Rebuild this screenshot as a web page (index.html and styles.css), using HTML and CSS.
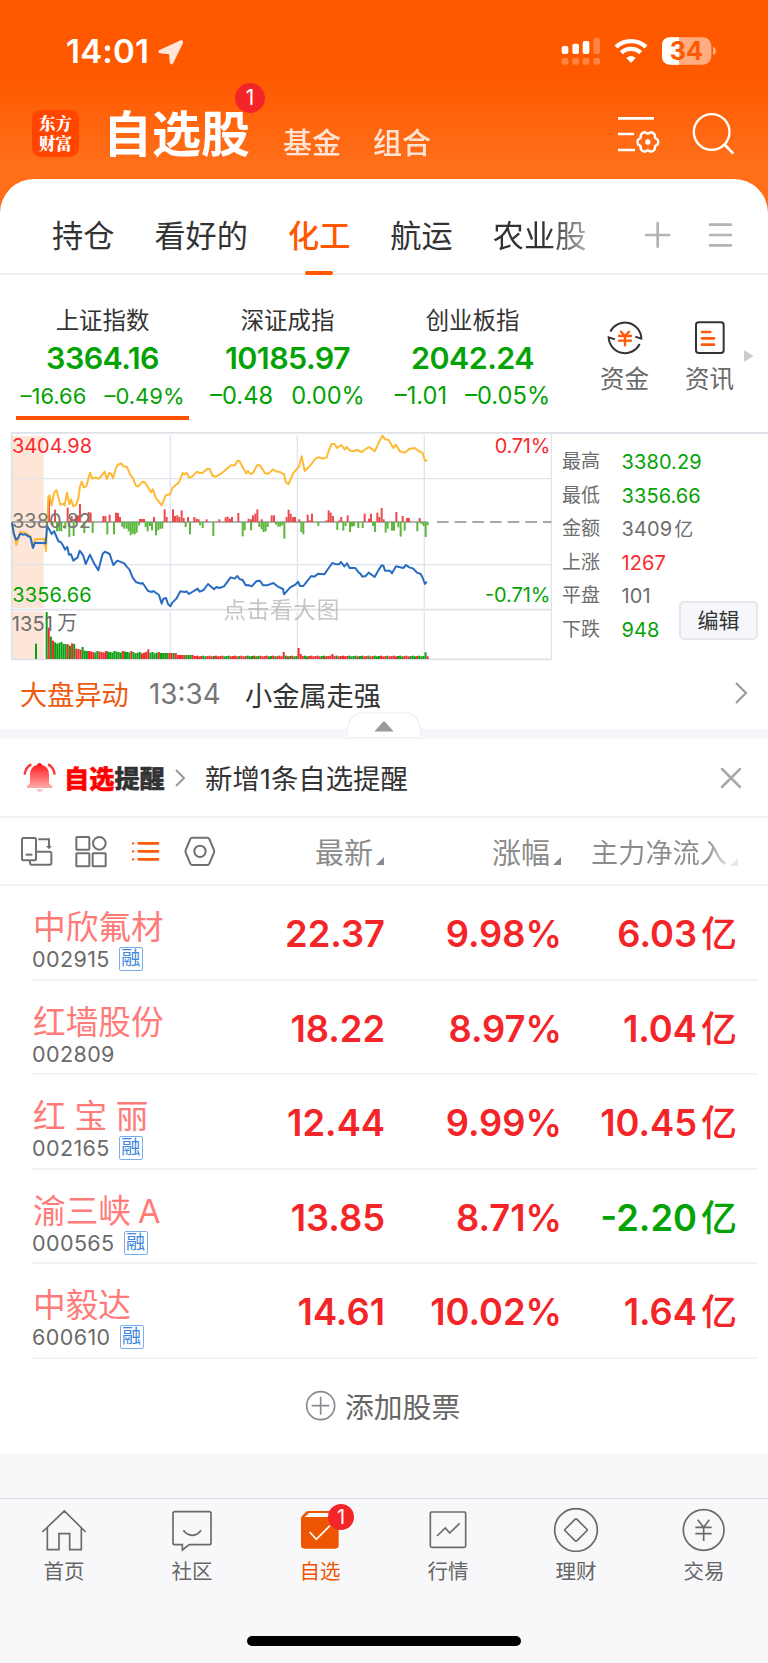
FILE: index.html
```html
<!DOCTYPE html>
<html lang="zh-CN">
<head>
<meta charset="utf-8">
<title>自选股</title>
<link rel="stylesheet" href="styles.css">
</head>
<body>
<header class="header">
  <div class="status">
    <span class="clock">14:01</span>
    <svg class="locate" viewBox="470 115 80 80" width="27" height="27"><path d="M476 148 L540 119 Q549 117 547 127 L518 187 Q513 194 508 186 L506 160 L479 157 Q470 154 476 148Z" fill="#fff" opacity=".85"/></svg>
    <svg class="signals" viewBox="576 105 474 96" width="158" height="32">
      <g fill="#fff"><rect x="581" y="138" width="20" height="24" rx="6"/><rect x="613" y="131" width="20" height="31" rx="6"/><rect x="644" y="123" width="20" height="39" rx="6"/>
      <g opacity=".25"><rect x="676" y="113" width="20" height="49" rx="6"/><rect x="581" y="174" width="20" height="20" rx="6"/><rect x="613" y="174" width="20" height="20" rx="6"/><rect x="644" y="174" width="20" height="20" rx="6"/><rect x="676" y="174" width="20" height="20" rx="6"/></g></g>
      <g fill="none" stroke="#fff" stroke-width="13"><path d="M744 141 A66 66 0 0 1 834 141"/><path d="M760 158 A42 42 0 0 1 818 158"/></g>
      <path d="M775 174 Q789 162 803 174 L789 189Z" fill="#fff"/>
      <rect x="882" y="112" width="148" height="82" rx="25" fill="#fff" opacity=".5"/>
      <path d="M933 112 H907 Q882 112 882 137 V169 Q882 194 907 194 H933Z" fill="#fff"/>
      <path d="M1035 140 Q1044 144 1044 153 Q1044 162 1035 166Z" fill="#fff" opacity=".5"/>
      <text x="955" y="180" class="battery">34</text>
    </svg>
  </div>
  <div class="titlebar">
    <div class="logo"><span>东方</span><span>财富</span></div>
    <h1 class="title">自选股<i class="badge">1</i></h1>
    <span class="subtitle">基金</span>
    <span class="subtitle">组合</span>
    <svg class="head-icons" viewBox="744 333 360 135" width="120" height="45" fill="none" stroke="#fff">
      <path d="M750 355H858M750 402H798M750 450H801" stroke-width="8"/>
      <path transform="translate(839.500 426) scale(.92)" stroke-width="8" stroke-linejoin="round" d="M32.200 -7.400 Q36 0 32.200 7.400 L24 13 L22.500 24.100 Q18 31 9.600 31.600 L0 27 L-9.600 31.600 Q-18 31 -22.500 24.100 L-24 13 L-32.200 7.400 Q-36 0 -32.200 -7.400 L-24 -13 L-22.500 -24.100 Q-18 -31 -9.600 -31.600 L0 -27 L9.600 -31.600 Q18 -31 22.500 -24.100 L24 -13Z"/>
      <circle cx="839.500" cy="426" r="8" fill="#fff" stroke="none"/>
      <circle cx="1031" cy="396" r="53.500" stroke-width="7"/><path d="M1068 432 L1096 461" stroke-width="8"/>
    </svg>
  </div>
</header>

<main>
  <nav class="groups">
    <span>持仓</span><span>看好的</span><span class="on">化工</span><span>航运</span><span class="fade">农业股</span>
    <svg class="group-tools" viewBox="825 660 276 90" width="92" height="30" stroke="#b3b3b3" stroke-width="8" stroke-linecap="round"><path d="M834 705H904M869 669V740"/><path d="M1026 674H1089M1026 705H1089M1026 736H1089"/></svg>
  </nav>

  <section class="indices">
    <div class="index on"><b>上证指数</b><strong>3364.16</strong><p><span>–16.66</span><span>–0.49%</span></p></div>
    <div class="index"><b>深证成指</b><strong>10185.97</strong><p><span>–0.48</span><span>0.00%</span></p></div>
    <div class="index"><b>创业板指</b><strong>2042.24</strong><p><span>–1.01</span><span>–0.05%</span></p></div>
    <div class="quick">
      <svg viewBox="714 114 114 117" width="38" height="39" fill="none" stroke="#333" stroke-width="6"><path d="M727 155 A49 49 0 0 1 820 176 L802 170"/><path d="M815 192 A49 49 0 0 1 722 172 L741 178" /><path d="M759 155 L771 168 L783 155M753 168H789M753 182H789M771 168V196" stroke="#ff5a0a" stroke-width="7" stroke-linecap="round"/></svg>
      <span>资金</span>
    </div>
    <div class="quick">
      <svg viewBox="969 114 114 117" width="38" height="39" fill="none"><rect x="984" y="127" width="83" height="92" rx="8" stroke="#333" stroke-width="6"/><path d="M1002 156H1027M1002 175H1038M1002 194H1038" stroke="#ff5a0a" stroke-width="8" stroke-linecap="round"/></svg>
      <span>资讯</span>
    </div>
    <svg class="more" viewBox="0 0 10 12" width="10" height="12"><path d="M0 0L9.500 6L0 12Z" fill="#ccc"/></svg>
  </section>

  <section class="market">
    <svg class="chart" viewBox="0 21 1656 687" width="552" height="229">
      <rect x="36" y="33" width="95" height="516" fill="#fde5d8"/><rect x="36" y="559" width="95" height="143" fill="#fde5d8"/>
      <g stroke="#e1e4ec" stroke-width="5" fill="none"><path d="M33 23.500H1656" stroke="#dfe1e8"/><path d="M35 21V704" stroke="#dfe1e8"/><path d="M36 161H1654M36 419H1654" stroke-width="4"/><path d="M33 554H1654M33 703H1656" stroke="#dfe1e8"/><path d="M511 31V547M511 560V702M892 31V547M892 560V702M1273 31V547M1273 560V702" stroke-width="4"/><path d="M1654 24V704" stroke-width="4"/></g>
      <path d="M36 291H1282" stroke="#999" stroke-width="4"/><path d="M1311 291H1654" stroke="#8c8c8c" stroke-width="5" stroke-dasharray="35 18"/>
      <g id="bars"></g>
      <g fill="none" stroke-width="6" stroke-linejoin="round">
        <path stroke="#fdbb35" d="M37 298L42 325L49 360L61 320L78 325L91 333L99 366L105 342L132 342L138 378L145 217L149 211L155 242L162 204L169 195L181 239L190 236L194 241L201 203L208 238L213 223L220 244L228 240L235 220L240 184L245 170L251 187L259 184L270 143L277 161L286 158L298 161L314 140L320 162L328 144L334 147L339 160L348 128L354 119L364 115L370 124L381 126L390 148L399 160L408 183L415 184L428 170L434 171L453 202L459 193L467 218L485 241L497 211L510 208L517 189L537 172L548 144L554 148L560 143L567 158L576 155L591 140L599 144L608 143L622 131L629 132L638 153L647 155L665 145L693 121L705 121L712 108L718 107L738 145L744 138L751 147L759 144L771 121L780 121L795 145L806 146L819 133L828 139L840 141L845 145L852 147L857 171L865 178L867 174L880 144L897 125L905 94L914 138L934 118L945 102L956 97L970 101L980 97L987 75L995 57L1004 57L1011 69L1024 60L1034 73L1040 66L1050 77L1063 78L1070 75L1086 81L1096 73L1107 66L1118 74L1124 79L1138 49L1148 32L1155 43L1166 45L1180 69L1187 59L1200 79L1215 83L1227 72L1244 69L1256 78L1267 83L1275 107L1282 106"/>
        <path stroke="#286cc2" d="M36 292L41 325L48 344L54 340L60 326L68 329L77 328L85 334L91 336L99 369L105 353L137 355L141 302L149 316L155 327L162 318L175 348L183 352L190 363L195 374L202 366L207 389L213 388L220 407L233 397L239 377L250 392L257 417L270 389L282 415L295 436L308 386L315 380L329 387L340 420L352 407L373 415L380 425L388 433L398 458L409 472L424 476L428 474L444 498L456 501L460 498L477 510L485 536L490 521L498 519L504 537L511 544L517 533L529 521L541 499L554 501L560 499L567 507L593 491L599 500L611 495L624 477L642 493L649 486L658 489L672 484L692 457L704 461L712 453L720 463L728 465L737 481L744 480L755 484L770 468L780 467L789 481L801 481L820 474L834 485L849 492L852 508L870 488L887 478L894 470L900 483L910 483L918 473L934 453L943 455L955 446L973 448L984 432L997 414L1008 418L1017 418L1023 411L1033 424L1041 415L1049 429L1066 429L1074 440L1081 446L1087 455L1097 453L1106 443L1124 456L1137 433L1145 421L1150 422L1155 437L1170 437L1176 445L1188 424L1210 429L1218 420L1228 427L1240 431L1251 443L1262 447L1267 456L1275 477L1280 470"/>
      </g>
      <g class="chart-text">
        <text x="36" y="84" textLength="240" class="up">3404.98</text><text x="36" y="308" textLength="237" fill="#777">3380.82</text><text x="37" y="532" textLength="238" class="down">3356.66</text><text x="35" y="617" textLength="124" fill="#6d6d6d">1351</text><text x="172" y="616" fill="#6d6d6d">万</text>
        <text x="1484" y="84" textLength="167" class="up">0.71%</text><text x="1455" y="532" textLength="196" class="down">-0.71%</text><text x="670" y="580" textLength="348" class="hint">点击看大图</text>
      </g>
    </svg>
    <div class="stats">
      <dl><dt>最高</dt><dd class="down">3380.29</dd><dt>最低</dt><dd class="down">3356.66</dd><dt>金额</dt><dd>3409<em>亿</em></dd><dt>上涨</dt><dd class="up">1267</dd><dt>平盘</dt><dd>101</dd><dt>下跌</dt><dd class="down">948</dd></dl>
      <button class="edit">编辑</button>
    </div>
  </section>

  <section class="news">
    <span class="topic">大盘异动</span><time>13:34</time><span class="headline">小金属走强</span>
    <svg viewBox="0 0 14 24" width="14" height="24" fill="none" stroke="#999" stroke-width="2"><path d="M2 2L12 12L2 22"/></svg>
  </section>
  <div class="divider">
    <svg class="handle" viewBox="1038 155 228 80" width="76" height="27"><path d="M1041 232 Q1040 159 1085 157 H1219 Q1263 159 1263 232Z" fill="#fff" stroke="#eff0f3" stroke-width="4"/><path d="M1123 213L1148 185Q1152 181 1156 185L1181 213Z" fill="#999"/></svg>
  </div>

  <section class="alert">
    <svg viewBox="66 306 105 99" width="35" height="33"><defs><linearGradient id="bell" x2="0" y2="1"><stop stop-color="#f11"/><stop offset="1" stop-color="#ffc4c4"/></linearGradient></defs><path fill="url(#bell)" d="M119 312Q125 312 126 318Q147 323 147 347V369Q147 377 157 382V387H81V382Q90 377 90 369V347Q90 323 111 318Q112 312 119 312ZM109 391H129Q127 399 119 399Q111 399 109 391Z"/><path d="M94 316Q77 324 74 347M144 316Q161 324 164 347" fill="none" stroke="#ff3535" stroke-width="7"/></svg>
    <span class="alert-name"><i>自选</i>提醒</span>
    <svg viewBox="0 0 11 18" width="11" height="18" fill="none" stroke="#999" stroke-width="2"><path d="M1 1L9 9L1 17"/></svg>
    <span class="alert-text">新增1条自选提醒</span>
    <svg class="close" viewBox="0 0 22 22" width="22" height="22" stroke="#aaa" stroke-width="2.500" stroke-linecap="round"><path d="M2 2L20 20M20 2L2 20"/></svg>
  </section>

  <section class="toolbar">
    <svg class="views" viewBox="60 520 594 108" width="198" height="36" fill="none" stroke="#707070" stroke-width="6">
      <rect x="66" y="535" width="42" height="67" rx="5"/><path d="M77 585H97"/><path d="M108 576H149Q154 576 154 581V610Q154 615 149 615H96Q90 615 90 609V602"/><path d="M115 539H147V562"/><path d="M138 559H156L147 569Z" fill="#707070" stroke="none"/>
      <rect x="229" y="532" width="39" height="38" rx="2"/><circle cx="298" cy="551" r="19"/><rect x="229" y="581" width="39" height="39" rx="2"/><rect x="278" y="581" width="39" height="39" rx="2"/>
      <g stroke="#ff5a0a" stroke-width="8" stroke-linecap="round"><path d="M416 551H474M416 575H474M416 599H474"/><path d="M399 551H400M399 575H400M399 599H400" stroke-width="7"/></g>
      <path d="M577 534H622Q626 534 628 538L642 571Q643 575 642 579L628 612Q626 616 622 616H577Q573 616 571 612L557 579Q556 575 557 571L571 538Q573 534 577 534Z"/><circle cx="600" cy="575" r="17"/>
    </svg>
    <span class="col c1">最新</span><span class="col c2">涨幅</span><span class="col c3">主力净流入</span>
  </section>

  <section class="stocks">
    <div class="stock"><div class="name"><b>中欣氟材</b><p>002915<i>融</i></p></div><span>22.37</span><span>9.98%</span><span>6.03<em>亿</em></span></div>
    <div class="stock"><div class="name"><b>红墙股份</b><p>002809</p></div><span>18.22</span><span>8.97%</span><span>1.04<em>亿</em></span></div>
    <div class="stock"><div class="name"><b class="spaced">红 宝 丽</b><p>002165<i>融</i></p></div><span>12.44</span><span>9.99%</span><span>10.45<em>亿</em></span></div>
    <div class="stock"><div class="name"><b>渝三峡<em>A</em></b><p>000565<i>融</i></p></div><span>13.85</span><span>8.71%</span><span class="neg">-2.20<em>亿</em></span></div>
    <div class="stock"><div class="name"><b>中毅达</b><p>600610<i>融</i></p></div><span>14.61</span><span>10.02%</span><span>1.64<em>亿</em></span></div>
  </section>
  <div class="add">
    <svg viewBox="915 90 93 93" width="31" height="31" fill="none" stroke="#8a8a92" stroke-width="5"><circle cx="962" cy="137" r="42"/><path d="M935 137H988M962 110V164"/></svg>
    <span>添加股票</span>
  </div>
</main>

<footer class="tabbar">
  <a><svg viewBox="117 438 150 138"><path d="M127 516L193 453L257 516M142 503V569H177V521H209V569H244V503"/></svg><span>首页</span></a>
  <a><svg viewBox="501 438 150 138"><path d="M524 455H628Q633 455 633 460V549Q633 554 628 554H568L547 570V554H524Q519 554 519 549V460Q519 455 524 455ZM550 511Q561 526 577 526Q593 526 603 511"/></svg><span>社区</span></a>
  <a class="on"><svg viewBox="885 438 150 138"><path stroke="none" fill="#ee5500" fill-rule="evenodd" d="M925 453H1006Q1016 453 1016 463V556Q1016 566 1006 566H913Q903 566 903 556V475Q903 471 906 468L918 456Q921 453 925 453ZM927 459L914 471H1010V459Z"/><path d="M929 516L949 538L990 497" stroke="#fff"/></svg><i class="badge">1</i><span>自选</span></a>
  <a><svg viewBox="165 438 150 138"><rect x="187" y="456" width="106" height="106" rx="4"/><path d="M207 528L232 504L245 519L275 490"/></svg><span>行情</span></a>
  <a><svg viewBox="549 438 150 138"><circle cx="624" cy="510" r="64"/><path d="M621 478Q624 475 627 478L656 507Q659 510 656 513L627 542Q624 545 621 542L592 513Q589 510 592 507Z"/></svg><span>理财</span></a>
  <a><svg viewBox="933 438 150 138"><circle cx="1007" cy="510" r="61"/><path d="M989 479L1007 502L1024 479M982 502H1031M982 521H1031M1007 502V543"/></svg><span>交易</span></a>
</footer>
<div class="home"></div>
<script src="chart.js"></script>
</body>
</html>
```
FILE: styles.css
```css
* { box-sizing: border-box; margin: 0; padding: 0; }
body { width: 768px; height: 1663px; overflow: hidden; background: #f8f8fb; font-family: Inter, "Noto Sans CJK SC", sans-serif; color: #333; white-space: nowrap; }
i, em { font-style: normal; }
svg { display: block; flex: none; }
.up { color: #f82a2e; fill: #f82a2e; }
.down { color: #05a205; fill: #05a205; }

.header { height: 215px; background: linear-gradient(#ff5900 0, #ff5900 78px, #ff6f1a 165px, #ff6f1a); color: #fff; }
.status { height: 102px; padding: 0 50px 0 66px; display: flex; align-items: center; }
.clock { font-size: 33px; font-weight: 600; width: 91px; letter-spacing: .2px; }
.signals { margin-left: auto; }
.locate { margin-top: 2px; }
.battery { font-size: 75px; font-weight: 700; fill: #ff5900; text-anchor: middle; }
.titlebar { height: 77px; padding: 0 32px; display: flex; align-items: flex-start; }
.logo { width: 47px; height: 47px; margin-top: 8px; border-radius: 9px; background: #ff4500; display: flex; flex-direction: column; align-items: center; padding-top: 4px; font: 900 16.500px/19.500px "Noto Serif CJK SC", "Noto Sans CJK SC", sans-serif; }
.title { position: relative; margin-left: 24px; width: 180px; font-size: 49px; letter-spacing: 0; line-height: 65px; font-weight: 600; }
.badge { position: absolute; left: 132px; top: -19px; width: 30px; height: 30px; border-radius: 50%; background: #f42529; color: #fff; font-size: 21px; line-height: 30px; font-weight: 400; letter-spacing: 0; text-align: center; }
.subtitle { width: 90px; font-size: 29px; line-height: 40px; margin-top: 22px; opacity: .82; font-weight: 500; }
.head-icons { margin-left: auto; margin-top: 9px; }

main { display: block; position: relative; margin-top: -36px; background: #fff; border-radius: 34px 34px 0 0; height: 1274px; }
.groups { height: 96px; padding-left: 52px; display: flex; font-size: 31.200px; line-height: 114px; border-bottom: 2px solid #f0f0f1; }
.groups span { margin-right: 40px; }
.groups .on { position: relative; color: #ff5900; font-weight: 500; }
.groups .on::after { content: ""; position: absolute; left: 17px; bottom: -2px; width: 28px; height: 4px; border-radius: 2px; background: #ff5900; }
.groups .fade { background: linear-gradient(90deg, #333 60%, #aaa); -webkit-background-clip: text; color: transparent; margin: 0; }
.group-tools { margin: 41px 33px 0 auto; }

.indices { height: 157px; display: flex; padding-left: 16px; }
.index { width: 173px; margin-right: 12px; height: 145px; padding-top: 30px; text-align: center; display: flex; flex-direction: column; }
.index.on { border-bottom: 4px solid #ff5200; }
.index b { font-size: 23.400px; font-weight: 400; line-height: 31px; }
.index strong { font-size: 30.500px; font-weight: 600; line-height: 44px; color: #05a205; letter-spacing: -.6px; }
.index p { display: flex; justify-content: center; gap: 18px; font-size: 23.700px; line-height: 32px; color: #05a205; }
.index.on p { font-size: 22px; }
.quick { width: 85px; padding-top: 43px; display: flex; flex-direction: column; align-items: center; font-size: 24.500px; line-height: 40px; color: #6a6a6a; }
.index + .quick { margin-left: 11px; }
.quick svg { margin-bottom: 2px; }
.more { margin: 75px 0 0 -8px; }

.market { display: flex; height: 229px; }
.chart-text { font-size: 60px; }
.chart-text .hint { fill: #999; opacity: .55; font-size: 68px; }
.stats { width: 216px; border-top: 2px solid #dfe1e8; padding: 10px 0 0 10px; position: relative; }
.stats dl { display: grid; grid-template-columns: 59.500px 1fr; grid-auto-rows: 33.500px; line-height: 36px; font-size: 19px; color: #6d6d6d; }
.stats dd { font-size: 20px; letter-spacing: .1px; }
.stats em { margin-left: 2px; font-size: 19px; }
.edit { position: absolute; left: 127px; top: 167px; width: 79px; height: 39px; border: 2px solid #e6e7ec; border-radius: 5px; background: #f6f7fa; font: 21px/34px Inter, "Noto Sans CJK SC", sans-serif; color: #333; }

.news { height: 68px; padding: 0 20px 4px 20px; display: flex; align-items: center; font-size: 27.200px; }
.topic { width: 129px; color: #ee5a10; }
.news time { width: 96px; color: #777; font-size: 27.800px; padding-top: 2px; }
.news svg { margin-left: auto; }
.headline { margin-top: 2px; }
.divider { height: 10px; background: #f6f7fa; position: relative; }
.handle { position: absolute; left: 346px; top: -17px; }

.alert { height: 79px; padding: 0 26px 0 22px; display: flex; align-items: center; border-bottom: 2px solid #f3f3f4; }
.alert-name { width: 111px; margin-left: 7px; font-size: 25.200px; font-weight: 900; -webkit-text-stroke: .4px; }
.alert-name i { color: #f00; }
.alert-text { margin-left: 19px; font-size: 27.400px; }
.alert-name, .alert-text { padding-bottom: 2px; }
.close { margin-left: auto; }

.toolbar { height: 68px; padding-left: 20px; display: flex; align-items: center; border-bottom: 2px solid #f3f3f4; color: #8c8c8c; }
.col { position: relative; font-size: 29px; }
.col::after { content: ""; position: absolute; right: -11px; bottom: 7px; border-left: 8px solid transparent; border-bottom: 8px solid #888892; }
.c1 { margin-left: 97px; }
.c2 { margin-left: 119px; }
.c3 { margin-left: 41px; font-size: 27.200px; background: linear-gradient(90deg, #8c8c8c 85%, #ddd); -webkit-background-clip: text; color: transparent; }
.c3::after { border-bottom-color: #e8e8ea; right: -11px; bottom: 5px; }

.stock { height: 94.500px; margin: 0 10px 0 32px; border-bottom: 2px solid #f3f3f4; display: grid; grid-template-columns: 176px 177px 177px 175px; color: #f42529; font-size: 36.300px; font-weight: 600; line-height: 96px; text-align: right; }
.name { text-align: left; font-weight: 400; padding-top: 18px; }
.name b { display: block; padding-left: 1px; font-size: 32.700px; line-height: 46px; font-weight: 400; color: #ff7b79; }
.name .spaced { word-spacing: -.5px; }
.name em { font-size: inherit; font-weight: inherit; margin-left: 7px; }
.name p { display: flex; align-items: center; height: 24px; margin: -3px 0 0 0; font-size: 21.500px; letter-spacing: .4px; line-height: 24px; color: #6a6a6a; }
.name i { margin-left: 9px; width: 24px; height: 24px; border: 1.500px solid #78aeea; border-radius: 2px; color: #3c86dc; font-size: 19px; letter-spacing: 0; line-height: 21px; text-align: center; display: flex; justify-content: center; }
.stock span em { font-size: 36px; font-weight: 500; margin-left: 4px; }
.stock .neg { color: #05a205; }
.add { height: 95px; display: flex; align-items: center; padding: 0 0 1px 305px; gap: 9px; font-size: 28.800px; color: #666; }

.tabbar { margin-top: 45px; height: 138px; border-top: 1px solid #dcdde0; display: flex; background: #f8f8fb; }
.tabbar a { position: relative; width: 128px; padding-top: 7px; display: flex; flex-direction: column; align-items: center; font-size: 20.500px; line-height: 40px; color: #666; }
.tabbar svg { width: 50px; height: 46px; fill: none; stroke: #6a6a6a; stroke-width: 5; }
.tabbar .on { color: #ee5500; }
.tabbar .badge { left: 72px; top: 5px; width: 26px; height: 26px; line-height: 26px; font-size: 20px; }
.home { margin: 0 auto; width: 274px; height: 10px; border-radius: 5px; background: #000; }
```
FILE: chart.js
```js
// Minute bars, in chart units: [x, height] around the midline at y = 291.
const up = [147,78,165,37,203,43,215,18,228,20,234,20,240,54,266,30,272,28,310,18,316,18,329,22,348,28,354,27,360,15,420,9,426,9,432,9,462,15,494,38,500,15,519,38,525,18,532,20,538,15,545,35,551,12,564,15,583,15,590,10,596,8,620,8,658,8,677,14,683,16,690,10,696,15,715,27,746,10,753,8,759,20,766,25,772,38,785,8,815,20,822,20,860,15,866,37,872,25,879,15,885,15,898,8,923,22,929,5,936,25,980,5,986,35,992,28,999,18,1018,5,1024,15,1043,20,1094,25,1107,10,1113,25,1132,28,1138,15,1145,42,1151,8,1189,30,1208,18,1221,12,1227,12,1259,12];
const down = [158,10,171,28,178,27,184,28,196,20,208,45,221,42,253,33,278,33,322,37,342,37,367,15,373,20,380,20,386,28,392,40,398,35,404,37,410,32,417,10,437,15,443,28,450,12,456,25,468,40,475,25,481,20,487,20,557,15,570,37,600,10,608,18,640,42,728,43,734,25,753,25,778,15,785,22,791,30,797,28,803,15,828,8,835,14,841,14,847,10,853,50,904,30,910,37,955,12,1012,24,1030,26,1037,12,1050,30,1056,14,1062,12,1075,18,1088,18,1119,12,1125,30,1157,32,1163,20,1176,26,1182,26,1195,16,1202,44,1214,26,1252,28,1265,6,1271,12,1277,45,1283,10];
let html = '';
const bar = (x, y, h, c) => { html += `<rect x="${x - 3}" y="${y}" width="6" height="${h}" fill="${c}"/>`; };
for (let i = 0; i < up.length; i += 2) bar(up[i], 291 - up[i + 1], up[i + 1], '#ec4b4e');
for (let i = 0; i < down.length; i += 2) bar(down[i], 291, down[i + 1], '#5cb83c');

// Volume: opening heights, then the tapering tail with a few spikes.
const open = [141,94,67,55,50,46,49,51,45,45,44,40,47,45,31,30,28,36,25,24];
const spikes = { 48: 29, 112: 21, 119: 33, 120: 15, 135: 15, 179: 20 };
const colours = 'grgrggggggrgrgrrrgggrrrggrrrrgggggggrgggrggggrrrrggggrggggrrgrrrrrgggrrrrrggrrrgrrrrgggrrrrgrrrgggrggrrrrggrgrrrrgrgrggrrrggrrrrrrggrrrrrgrrrrrggggrggrrgrrgggrrrgrrrrgggrrrgggrggggrgr'.padEnd(181, 'g');
for (let i = 0; i < 181; i++) {
  const x = 140 + i * 6.35;
  const tail = x < 400 ? 24 - (i % 4) * 1.5 : x < 480 ? 17 + (i % 3) * 2 : x < 530 ? 18 : x < 580 ? 12 : 8 + (i % 3);
  const h = spikes[i] || open[i] || tail;
  bar(x, 702 - h, h, colours[i] === 'r' ? '#ef2b2f' : '#0c9f12');
}
bar(108, 656, 46, '#0c9f12');
document.getElementById('bars').innerHTML = html;
```
